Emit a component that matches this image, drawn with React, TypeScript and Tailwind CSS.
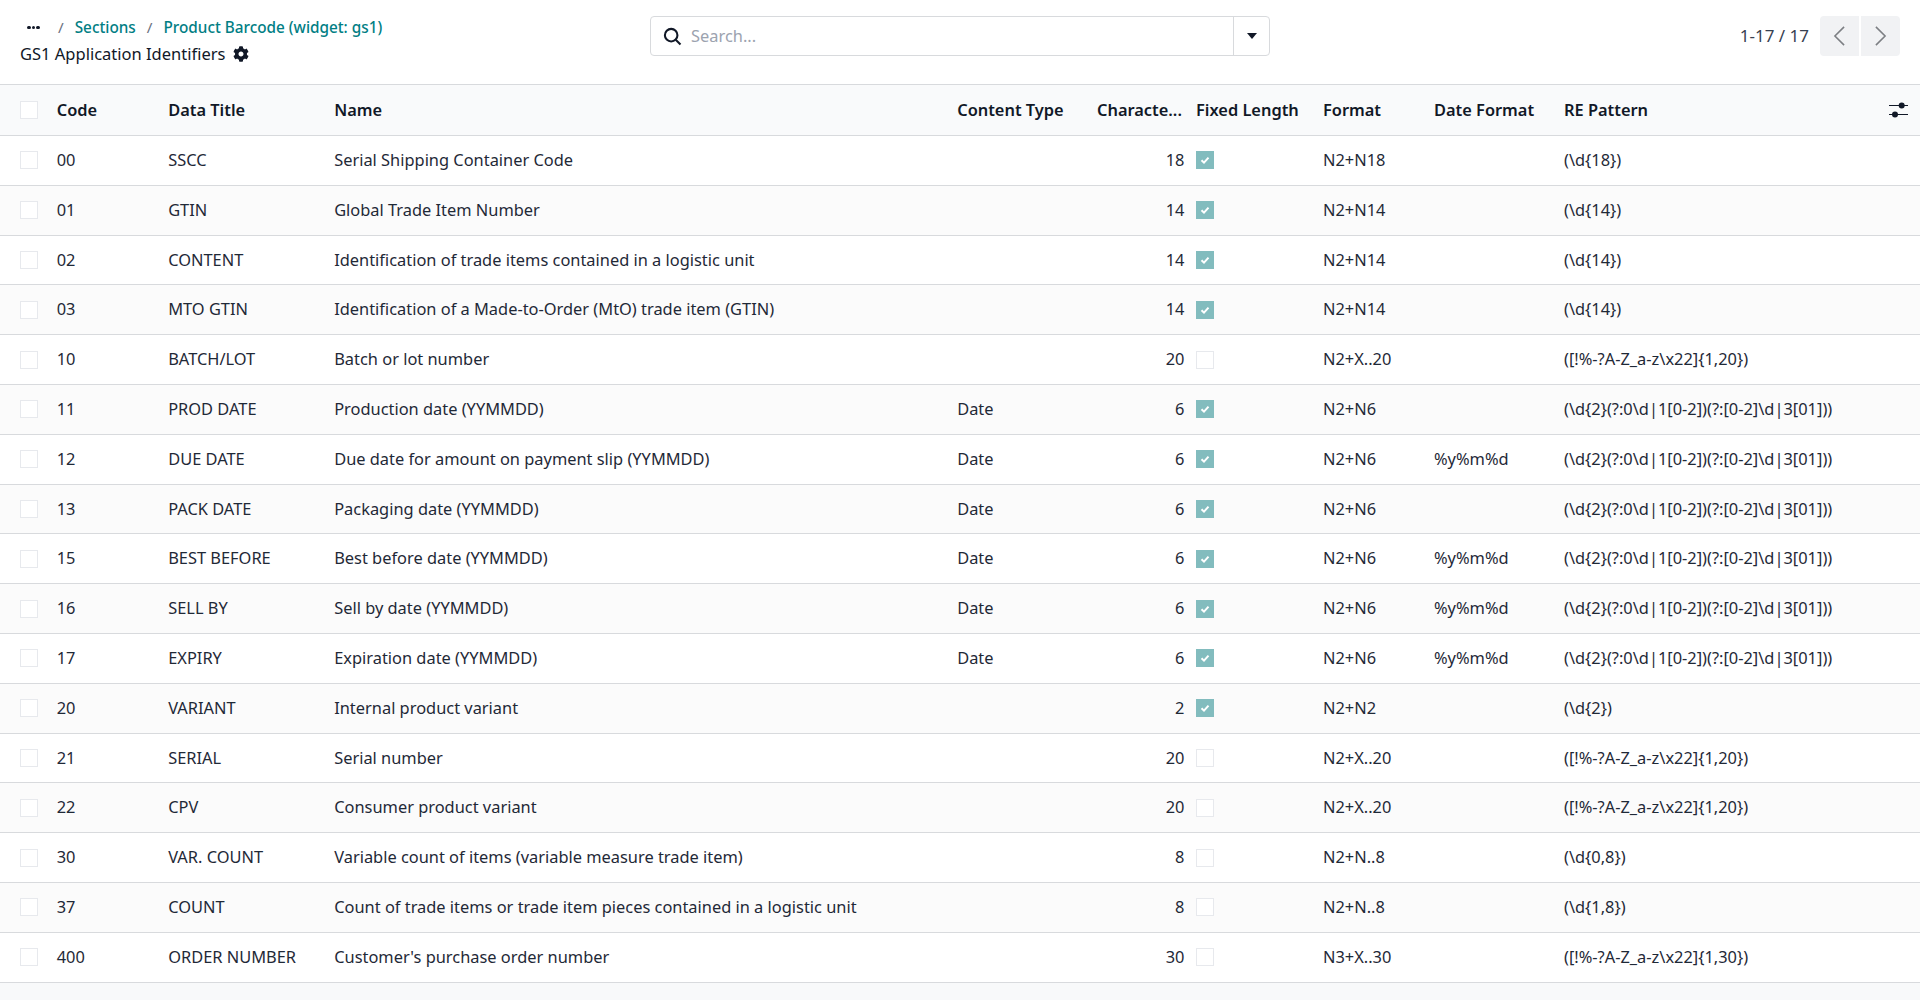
import { FaCog } from "react-icons/fa";

type Row = {
  code: string;
  title: string;
  name: string;
  type?: string;
  chars: number;
  fixed: boolean;
  format: string;
  dateFormat?: string;
  pattern: string;
};

const DATE_RE = "(\\d{2}(?:0\\d|1[0-2])(?:[0-2]\\d|3[01]))";
const ALPHA_20 = "([!%-?A-Z_a-z\\x22]{1,20})";

const ROWS: Row[] = [
  { code: "00", title: "SSCC", name: "Serial Shipping Container Code", chars: 18, fixed: true, format: "N2+N18", pattern: "(\\d{18})" },
  { code: "01", title: "GTIN", name: "Global Trade Item Number", chars: 14, fixed: true, format: "N2+N14", pattern: "(\\d{14})" },
  { code: "02", title: "CONTENT", name: "Identification of trade items contained in a logistic unit", chars: 14, fixed: true, format: "N2+N14", pattern: "(\\d{14})" },
  { code: "03", title: "MTO GTIN", name: "Identification of a Made-to-Order (MtO) trade item (GTIN)", chars: 14, fixed: true, format: "N2+N14", pattern: "(\\d{14})" },
  { code: "10", title: "BATCH/LOT", name: "Batch or lot number", chars: 20, fixed: false, format: "N2+X..20", pattern: ALPHA_20 },
  { code: "11", title: "PROD DATE", name: "Production date (YYMMDD)", type: "Date", chars: 6, fixed: true, format: "N2+N6", pattern: DATE_RE },
  { code: "12", title: "DUE DATE", name: "Due date for amount on payment slip (YYMMDD)", type: "Date", chars: 6, fixed: true, format: "N2+N6", dateFormat: "%y%m%d", pattern: DATE_RE },
  { code: "13", title: "PACK DATE", name: "Packaging date (YYMMDD)", type: "Date", chars: 6, fixed: true, format: "N2+N6", pattern: DATE_RE },
  { code: "15", title: "BEST BEFORE", name: "Best before date (YYMMDD)", type: "Date", chars: 6, fixed: true, format: "N2+N6", dateFormat: "%y%m%d", pattern: DATE_RE },
  { code: "16", title: "SELL BY", name: "Sell by date (YYMMDD)", type: "Date", chars: 6, fixed: true, format: "N2+N6", dateFormat: "%y%m%d", pattern: DATE_RE },
  { code: "17", title: "EXPIRY", name: "Expiration date (YYMMDD)", type: "Date", chars: 6, fixed: true, format: "N2+N6", dateFormat: "%y%m%d", pattern: DATE_RE },
  { code: "20", title: "VARIANT", name: "Internal product variant", chars: 2, fixed: true, format: "N2+N2", pattern: "(\\d{2})" },
  { code: "21", title: "SERIAL", name: "Serial number", chars: 20, fixed: false, format: "N2+X..20", pattern: ALPHA_20 },
  { code: "22", title: "CPV", name: "Consumer product variant", chars: 20, fixed: false, format: "N2+X..20", pattern: ALPHA_20 },
  { code: "30", title: "VAR. COUNT", name: "Variable count of items (variable measure trade item)", chars: 8, fixed: false, format: "N2+N..8", pattern: "(\\d{0,8})" },
  { code: "37", title: "COUNT", name: "Count of trade items or trade item pieces contained in a logistic unit", chars: 8, fixed: false, format: "N2+N..8", pattern: "(\\d{1,8})" },
  { code: "400", title: "ORDER NUMBER", name: "Customer's purchase order number", chars: 30, fixed: false, format: "N3+X..30", pattern: "([!%-?A-Z_a-z\\x22]{1,30})" },
];

function Box({ checked = false }: { checked?: boolean }) {
  if (checked) {
    return (
      <span className="flex h-[18px] w-[18px] items-center justify-center bg-[#82bcbe]">
        <svg viewBox="0 0 12 12" className="h-3 w-3 fill-none stroke-white stroke-[2]">
          <path d="M2.5 6.2 5 8.6 9.5 3.6" />
        </svg>
      </span>
    );
  }
  return <span className="block h-[18px] w-[18px] border border-[#e7e9ed] bg-white" />;
}

function Pager() {
  return (
    <div className="ml-auto mr-5 flex items-center">
      <span className="mr-[11px] text-[17px] text-[#374151]">1-17 / 17</span>
      <button className="flex h-10 w-[39px] items-center justify-center rounded-l-[4px] bg-[#f1f2f4]">
        <svg viewBox="0 0 16 24" className="h-[22px] w-[15px] fill-none stroke-[#7c7f83] stroke-[1.7]">
          <path d="M13 2 3 12l10 10" />
        </svg>
      </button>
      <button className="ml-[2px] flex h-10 w-[39px] items-center justify-center rounded-r-[4px] bg-[#f1f2f4]">
        <svg viewBox="0 0 16 24" className="h-[22px] w-[15px] fill-none stroke-[#7c7f83] stroke-[1.7]">
          <path d="m3 2 10 10L3 22" />
        </svg>
      </button>
    </div>
  );
}

function ControlPanel() {
  return (
    <div className="flex h-[85px] items-start border-b border-[#d8dadd] bg-white">
      <div className="w-[650px] shrink-0 pl-5 pt-[14px]">
        <div className="flex h-[27px] items-center text-[15.3px] font-medium text-[#017e84]">
          <span className="ml-[7px] flex w-[14px] gap-[1px]">
            <i className="h-[3.5px] w-[3.5px] rounded-full bg-[#111827]" />
            <i className="h-[3.5px] w-[3.5px] rounded-full bg-[#111827]" />
            <i className="h-[3.5px] w-[3.5px] rounded-full bg-[#111827]" />
          </span>
          <span className="ml-[17px] mr-[11px] font-normal text-[#6b7280]">/</span>
          <span>Sections</span>
          <span className="mx-[11px] font-normal text-[#6b7280]">/</span>
          <span>Product Barcode (widget: gs1)</span>
        </div>
        <div className="flex h-[26px] items-center text-[16.5px] text-[#111827]">
          GS1 Application Identifiers
          <FaCog className="ml-2 h-4 w-4 text-[#111827]" />
        </div>
      </div>
      <div className="mt-4 flex h-10 w-[620px] shrink-0 items-center rounded-[4px] border border-[#d8dadd] bg-white">
        <svg viewBox="0 0 20 20" className="ml-3 h-[19px] w-[19px] fill-none stroke-[#111827] stroke-[2.2]">
          <circle cx="8.6" cy="8.6" r="6.6" />
          <path d="m13.4 13.4 5 5" />
        </svg>
        <span className="ml-[9px] flex-1 text-[16.4px] text-[#9ca3af]">Search...</span>
        <span className="flex h-full w-9 items-center justify-center border-l border-[#d8dadd]">
          <span className="h-0 w-0 border-x-[5px] border-t-[6px] border-x-transparent border-t-[#111827]" />
        </span>
      </div>
      <div className="mt-4 flex flex-1 items-center">
        <Pager />
      </div>
    </div>
  );
}

const TH = "px-[10px] text-left font-semibold text-[#111827] whitespace-nowrap";
const TD = "px-[10px] whitespace-nowrap";

function DataTable() {
  return (
    <table className="w-full table-fixed border-collapse text-[16.4px] text-[#1f2937]">
      <colgroup>
        <col className="w-[46.7px]" />
        <col className="w-[111.5px]" />
        <col className="w-[166px]" />
        <col className="w-[623px]" />
        <col className="w-[139.8px]" />
        <col className="w-[99px]" />
        <col className="w-[127px]" />
        <col className="w-[111px]" />
        <col className="w-[130px]" />
        <col />
        <col className="w-[40px]" />
      </colgroup>
      <thead>
        <tr className="h-[50.5px] border-b border-[#d8dadd] bg-[#f9fafb]">
          <th className="pl-5 text-left"><Box /></th>
          <th className={TH}>Code</th>
          <th className={TH}>Data Title</th>
          <th className={TH}>Name</th>
          <th className={TH}>Content Type</th>
          <th className={TH + " truncate !pr-[1.5px]"}>Characte...</th>
          <th className={TH}>Fixed Length</th>
          <th className={TH}>Format</th>
          <th className={TH}>Date Format</th>
          <th className={TH}>RE Pattern</th>
          <th>
            <svg viewBox="0 0 19 16" className="ml-[9px] h-4 w-[19px] fill-[#111827] stroke-[#111827]">
              <path d="M0 3.5h19M0 12.5h19" strokeWidth="1" />
              <circle cx="12.7" cy="3.5" r="3" stroke="none" />
              <circle cx="6" cy="12.5" r="3" stroke="none" />
            </svg>
          </th>
        </tr>
      </thead>
      <tbody>
        {ROWS.map((r, i) => (
          <tr key={r.code} className={`h-[49.81px] border-b border-[#d8dadd] ${i % 2 ? "bg-[#fbfbfb]" : "bg-white"}`}>
            <td className="pl-5"><Box /></td>
            <td className={TD}>{r.code}</td>
            <td className={TD}>{r.title}</td>
            <td className={TD}>{r.name}</td>
            <td className={TD}>{r.type}</td>
            <td className={TD + " text-right !pr-[1.5px]"}>{r.chars}</td>
            <td className={TD}><Box checked={r.fixed} /></td>
            <td className={TD}>{r.format}</td>
            <td className={TD}>{r.dateFormat}</td>
            <td className={TD}>{r.pattern}</td>
            <td />
          </tr>
        ))}
      </tbody>
    </table>
  );
}

export default function App() {
  return (
    <div className="flex h-screen flex-col bg-[#f8f9fa] font-['Noto_Sans',sans-serif]">
      <ControlPanel />
      <DataTable />
    </div>
  );
}
